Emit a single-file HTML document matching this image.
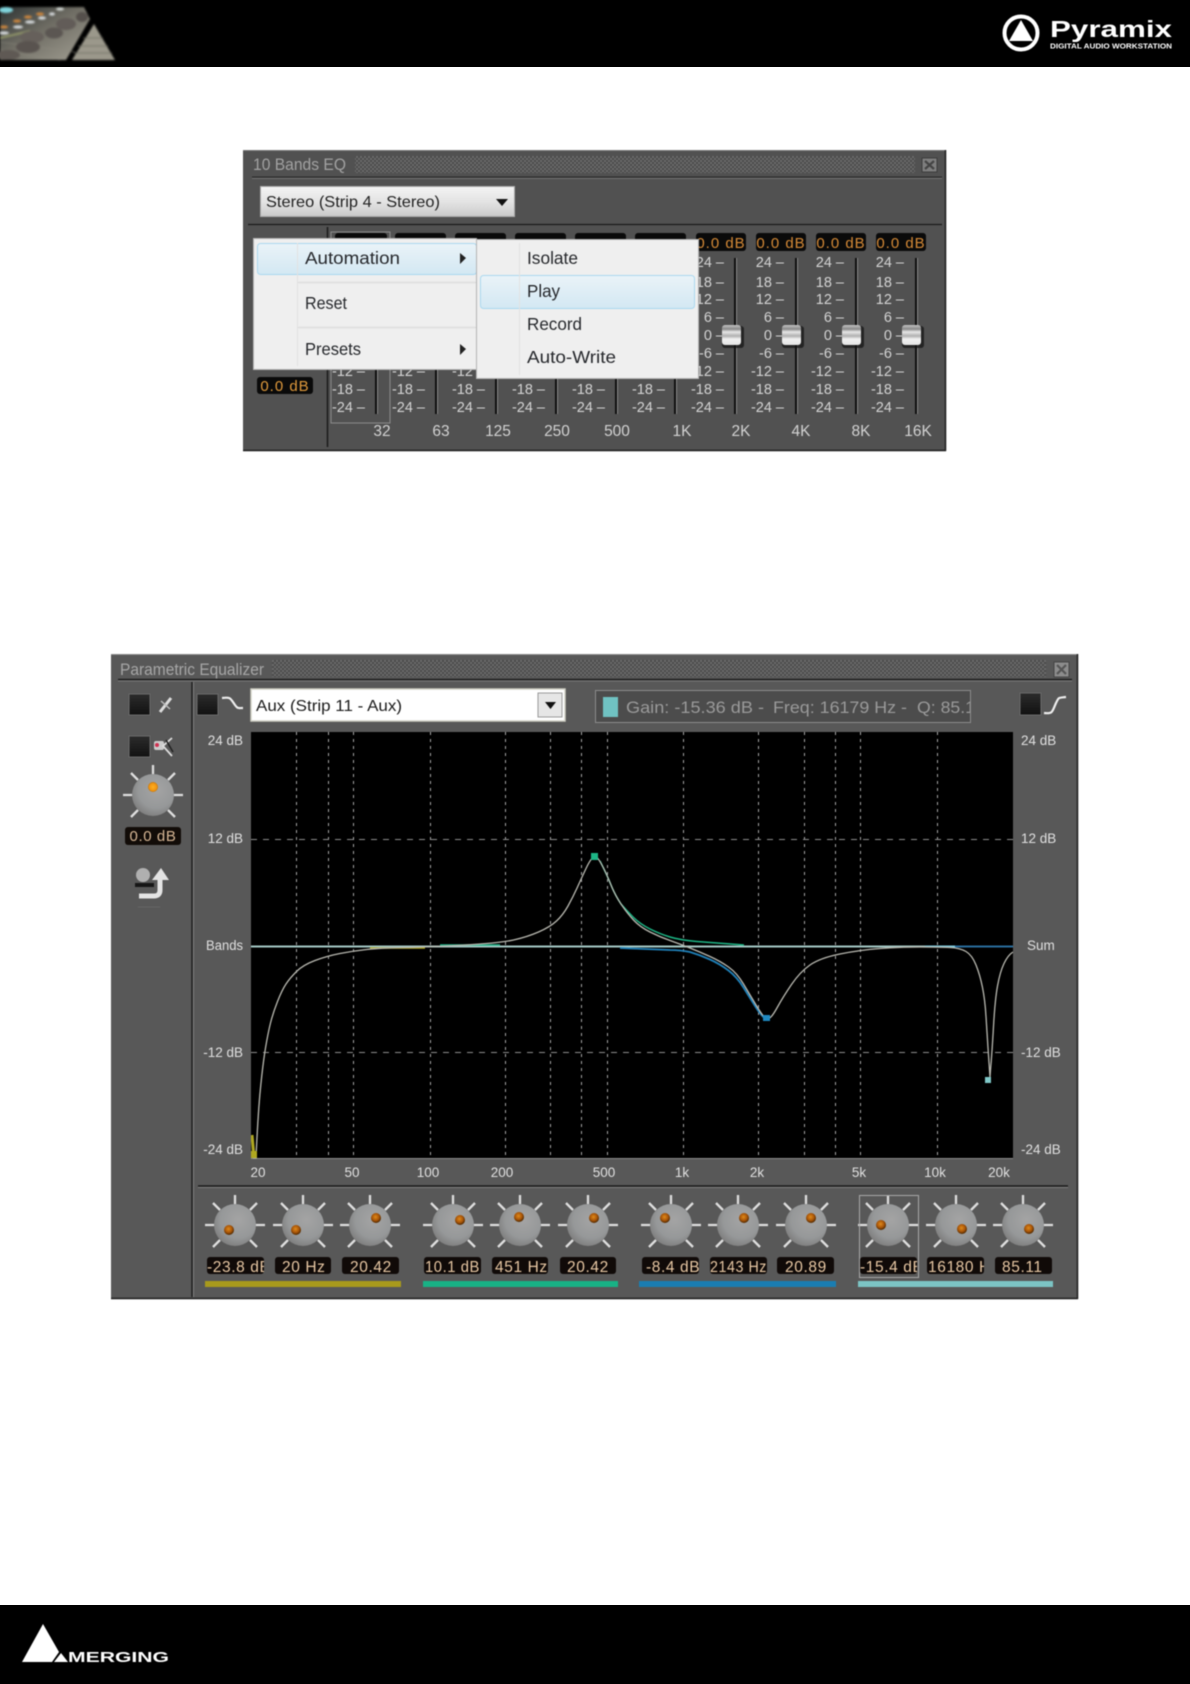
<!DOCTYPE html>
<html><head><meta charset="utf-8"><title>Pyramix EQ</title>
<style>
html,body{margin:0;padding:0;background:#fff}
svg{display:block;font-family:"Liberation Sans",Arial,sans-serif}
.soft{filter:blur(.4px)}
.soft2{filter:blur(.55px)}
.sc{font-size:14.5px;fill:#d4d4d4;text-anchor:end}
.fq{font-size:15.5px;fill:#d2d2d2;text-anchor:middle}
.db{font-size:15px;fill:#d68a36;letter-spacing:1px;text-anchor:middle}
.val{font-size:15.5px;fill:#e8c8a4;letter-spacing:.6px}
.ax{font-size:13.5px;fill:#e0e0e0}
.m{font-size:17.5px;fill:#25272b}
</style></head><body>
<svg width="1190" height="1684" viewBox="0 0 1190 1684" xmlns="http://www.w3.org/2000/svg">
<defs>
<pattern id="dots" width="4" height="4" patternUnits="userSpaceOnUse"><rect width="4" height="4" fill="#4c4c4c"/><circle cx="1" cy="1" r="1" fill="#727272"/><circle cx="3" cy="3" r="1" fill="#727272"/></pattern>
<linearGradient id="combo" x1="0" y1="0" x2="0" y2="1"><stop offset="0" stop-color="#f4f4f4"/><stop offset=".55" stop-color="#e2e2e2"/><stop offset="1" stop-color="#c8c8c8"/></linearGradient>
<linearGradient id="hi" x1="0" y1="0" x2="0" y2="1"><stop offset="0" stop-color="#eaf3f8"/><stop offset="1" stop-color="#d3e8f3"/></linearGradient>
<linearGradient id="cap" x1="0" y1="0" x2="0" y2="1"><stop offset="0" stop-color="#c4c4c4"/><stop offset=".2" stop-color="#8a8a8a"/><stop offset=".35" stop-color="#e8e8e8"/><stop offset=".55" stop-color="#b0b0b0"/><stop offset=".7" stop-color="#f2f2f2"/><stop offset="1" stop-color="#e4e4e4"/></linearGradient>
<linearGradient id="sq" x1="0" y1="0" x2="0" y2="1"><stop offset="0" stop-color="#2c2c2c"/><stop offset="1" stop-color="#111"/></linearGradient>
<radialGradient id="kn" cx=".58" cy=".38" r=".72"><stop offset="0" stop-color="#a4a4a4"/><stop offset=".6" stop-color="#969899"/><stop offset=".88" stop-color="#808080"/><stop offset="1" stop-color="#666"/></radialGradient>
<radialGradient id="led" cx=".45" cy=".4" r=".6"><stop offset="0" stop-color="#e08a1a"/><stop offset=".6" stop-color="#a85508"/><stop offset="1" stop-color="#4a2600"/></radialGradient>
<radialGradient id="led2" cx=".5" cy=".5" r=".55"><stop offset="0" stop-color="#ffb020"/><stop offset=".7" stop-color="#ee9210"/><stop offset="1" stop-color="#a06818"/></radialGradient>
<linearGradient id="cons" x1="0" y1="0" x2="1" y2="1"><stop offset="0" stop-color="#2c3232"/><stop offset=".45" stop-color="#6f6d64"/><stop offset="1" stop-color="#a3a094"/></linearGradient>
<g id="knob">
<g stroke="#dedede" stroke-width="2.300">
<path d="M0-30V-21M-30 0H-20M30 0H20M-22-22L-15-15M22-22L15-15M-22 22L-15 15M22 22L15 15"/>
</g>
<circle r="21" fill="url(#kn)"/>
</g>
<g id="fader">
<rect x="-13" y="0" width="22" height="22" rx="3" fill="#111" opacity=".7"/>
<rect x="-13" y="-1" width="19" height="20" rx="3" fill="url(#cap)"/>
</g>
<clipPath id="infoClip"><rect x="598" y="692" width="372" height="30"/></clipPath>
<clipPath id="plotClip"><rect x="251" y="732" width="762" height="427"/></clipPath>
</defs>

<!-- header / footer -->
<rect width="1190" height="67" fill="#000"/>
<rect y="1605" width="1190" height="79" fill="#000"/>

<!-- top photo logo -->
<g style="filter:blur(1px)">
<polygon points="0,7 84,7 90,19 66,60 0,60" fill="url(#cons)"/>
<polygon points="94,24 115,60 72,60" fill="#9b988b"/>
<path d="M83 38H103M78 46H108M74 53H112" stroke="#6e6c62" stroke-width=".8"/>
<path d="M0 50L60 60M0 42L75 52" stroke="#8e8c80" stroke-width="1" opacity=".5"/>
<ellipse cx="6" cy="10" rx="7" ry="3" fill="#7fd4dc"/>
<ellipse cx="28" cy="17" rx="4" ry="1.600" fill="#c8843e"/><ellipse cx="40" cy="14" rx="4" ry="1.600" fill="#c8843e"/><ellipse cx="17" cy="21" rx="4" ry="1.600" fill="#c8843e"/><ellipse cx="4" cy="27" rx="4" ry="1.600" fill="#c8843e"/>
<ellipse cx="30" cy="22" rx="5" ry="1.600" fill="#d4d8da"/><ellipse cx="42" cy="18" rx="4" ry="1.600" fill="#d4d8da"/><ellipse cx="52" cy="14" rx="3" ry="1.600" fill="#d4d8da"/><ellipse cx="18" cy="27" rx="5" ry="1.600" fill="#d4d8da"/><ellipse cx="4" cy="33" rx="5" ry="1.600" fill="#d4d8da"/>
<ellipse cx="60" cy="9" rx="4" ry="1.600" fill="#cfd4d0"/>
<path d="M0 38L30 31" stroke="#8f9468" stroke-width="2"/>
<ellipse cx="32" cy="37" rx="12" ry="6" fill="#66605b"/><ellipse cx="28" cy="47" rx="12" ry="6" fill="#59534f"/><ellipse cx="8" cy="55" rx="12" ry="5" fill="#5f5954"/>
<ellipse cx="54" cy="33" rx="9" ry="5.500" fill="#5b5652"/><ellipse cx="66" cy="24" rx="10" ry="6" fill="#625c58"/><ellipse cx="82" cy="17" rx="6" ry="5" fill="#55504c"/>
</g>

<!-- Pyramix logo -->
<g class="soft">
<circle cx="1021" cy="33" r="16.500" fill="none" stroke="#fff" stroke-width="4"/>
<polygon points="1021,20 1033,41 1009,41" fill="#fff"/>
<text x="1050" y="37" font-size="23" font-weight="bold" fill="#fff" textLength="122" lengthAdjust="spacingAndGlyphs">Pyramix</text>
<text x="1050" y="48.500" font-size="7.500" font-weight="bold" fill="#fff" textLength="122" lengthAdjust="spacingAndGlyphs">DIGITAL AUDIO WORKSTATION</text>
</g>

<!-- MERGING logo -->
<g class="soft">
<polygon points="43,1624 59,1652 52,1662 22,1662" fill="#fff"/>
<polygon points="61,1653 68,1662 54,1662" fill="#fff"/>
<text x="68" y="1662" font-size="15" font-weight="bold" fill="#fff" textLength="101" lengthAdjust="spacingAndGlyphs">MERGING</text>
</g>

<!-- ============ 10 BANDS EQ ============ -->
<g class="soft">
<rect x="243" y="150" width="703" height="301" fill="#515151"/>
<path d="M243 150.500H946" stroke="#777"/><path d="M945.500 150V451M243 450.500H946" stroke="#1c1c1c" stroke-width="1.500"/>
<text x="253" y="170" font-size="17" fill="#a2a2a2" textLength="93" lengthAdjust="spacingAndGlyphs">10 Bands EQ</text>
<rect x="355" y="156" width="560" height="17" fill="url(#dots)"/>
<rect x="922" y="158" width="15" height="14" fill="#7e7e7e" stroke="#3c3c3c"/><path d="M925 161L934 169M934 161L925 169" stroke="#444" stroke-width="2.200"/>
<path d="M252 177H942" stroke="#262626"/><path d="M252 178.500H942" stroke="#6e6e6e"/>
<path d="M248 224.500H942" stroke="#1a1a1a" stroke-width="1.200"/>
<rect x="260.500" y="186.500" width="254" height="30" fill="url(#combo)" stroke="#aaa"/>
<text x="266" y="207" font-size="16" fill="#222" textLength="174" lengthAdjust="spacingAndGlyphs">Stereo (Strip 4 - Stereo)</text>
<polygon points="496,199 508,199 502,206" fill="#111"/>
<path d="M327.500 227V447" stroke="#1a1a1a" stroke-width="1.500"/>
<rect x="331" y="232" width="59" height="191" fill="none" stroke="#8c8c8c"/>

<!-- display boxes -->
<g fill="#0a0a0a">
<rect x="335" y="233" width="52" height="18" rx="3"/><rect x="395" y="233" width="51" height="18" rx="3"/><rect x="455" y="233" width="51" height="18" rx="3"/><rect x="515" y="233" width="51" height="18" rx="3"/><rect x="575" y="233" width="51" height="18" rx="3"/><rect x="635" y="233" width="51" height="18" rx="3"/>
<rect x="696" y="233" width="50" height="18" rx="3"/><rect x="756" y="233" width="50" height="18" rx="3"/><rect x="816" y="233" width="50" height="18" rx="3"/><rect x="876" y="233" width="50" height="18" rx="3"/>
<rect x="257" y="377" width="56" height="17" rx="3"/>
</g>
<text class="db" x="721" y="248">0.0 dB</text><text class="db" x="781" y="248">0.0 dB</text><text class="db" x="841" y="248">0.0 dB</text><text class="db" x="901" y="248">0.0 dB</text>
<text class="db" x="285" y="391" style="fill:#e09a3c">0.0 dB</text>

<!-- tracks -->
<g stroke="#0e0e0e" stroke-width="2"><path d="M376 258V414M436 258V414M496 258V414M556 258V414M616 258V414M675 258V414M735 258V414M796 258V414M856 258V414M916 258V414"/></g>
<g stroke="#8a8a8a"><path d="M377.500 258V414M437.500 258V414M497.500 258V414M557.500 258V414M617.500 258V414M676.500 258V414M736.500 258V414M797.500 258V414M857.500 258V414M917.500 258V414"/></g>

<!-- scale labels -->
<g class="sc">
<text x="365" y="376">-12 –</text><text x="425" y="376">-12 –</text><text x="485" y="376">-12 –</text>
<text x="365" y="394">-18 –</text><text x="425" y="394">-18 –</text><text x="485" y="394">-18 –</text><text x="545" y="394">-18 –</text><text x="605" y="394">-18 –</text><text x="665" y="394">-18 –</text>
<text x="365" y="412">-24 –</text><text x="425" y="412">-24 –</text><text x="485" y="412">-24 –</text><text x="545" y="412">-24 –</text><text x="605" y="412">-24 –</text><text x="665" y="412">-24 –</text>
<text x="724" y="267">24 –</text><text x="724" y="287">18 –</text><text x="724" y="304">12 –</text><text x="724" y="322">6 –</text><text x="724" y="340">0 –</text><text x="724" y="358">-6 –</text><text x="724" y="376">-12 –</text><text x="724" y="394">-18 –</text><text x="724" y="412">-24 –</text>
<text x="784" y="267">24 –</text><text x="784" y="287">18 –</text><text x="784" y="304">12 –</text><text x="784" y="322">6 –</text><text x="784" y="340">0 –</text><text x="784" y="358">-6 –</text><text x="784" y="376">-12 –</text><text x="784" y="394">-18 –</text><text x="784" y="412">-24 –</text>
<text x="844" y="267">24 –</text><text x="844" y="287">18 –</text><text x="844" y="304">12 –</text><text x="844" y="322">6 –</text><text x="844" y="340">0 –</text><text x="844" y="358">-6 –</text><text x="844" y="376">-12 –</text><text x="844" y="394">-18 –</text><text x="844" y="412">-24 –</text>
<text x="904" y="267">24 –</text><text x="904" y="287">18 –</text><text x="904" y="304">12 –</text><text x="904" y="322">6 –</text><text x="904" y="340">0 –</text><text x="904" y="358">-6 –</text><text x="904" y="376">-12 –</text><text x="904" y="394">-18 –</text><text x="904" y="412">-24 –</text>
</g>
<use href="#fader" x="735" y="326"/><use href="#fader" x="795" y="326"/><use href="#fader" x="855" y="326"/><use href="#fader" x="915" y="326"/>

<!-- freq labels -->
<text class="fq" x="382" y="436">32</text><text class="fq" x="441" y="436">63</text><text class="fq" x="498" y="436">125</text><text class="fq" x="557" y="436">250</text><text class="fq" x="617" y="436">500</text><text class="fq" x="682" y="436">1K</text><text class="fq" x="741" y="436">2K</text><text class="fq" x="801" y="436">4K</text><text class="fq" x="861" y="436">8K</text><text class="fq" x="918" y="436">16K</text>

<!-- context menus -->
<rect x="253.500" y="238.500" width="223" height="131" fill="#efefef" stroke="#b4b4b4"/>
<rect x="257.500" y="243.500" width="219" height="31" rx="3" fill="url(#hi)" stroke="#aad8ef"/>
<path d="M297.500 243V366" stroke="#e2e2e2"/><path d="M298 282.500H476M298 327.500H476" stroke="#dedede" stroke-width="1.500"/>
<text class="m" x="305" y="264" textLength="95" lengthAdjust="spacingAndGlyphs">Automation</text>
<text class="m" x="305" y="309" textLength="42" lengthAdjust="spacingAndGlyphs">Reset</text>
<text class="m" x="305" y="355" textLength="56" lengthAdjust="spacingAndGlyphs">Presets</text>
<polygon points="460,253 466,258 460,264" fill="#222"/><polygon points="460,344 466,349 460,355" fill="#222"/>
<rect x="476.500" y="239.500" width="222" height="139" fill="#efefef" stroke="#b4b4b4"/>
<rect x="480.500" y="275.500" width="214" height="33" rx="3" fill="url(#hi)" stroke="#aad8ef"/>
<path d="M519.500 243V375" stroke="#e2e2e2"/>
<text class="m" x="527" y="264" textLength="51" lengthAdjust="spacingAndGlyphs">Isolate</text>
<text class="m" x="527" y="297" textLength="33" lengthAdjust="spacingAndGlyphs">Play</text>
<text class="m" x="527" y="330" textLength="55" lengthAdjust="spacingAndGlyphs">Record</text>
<text class="m" x="527" y="363" textLength="89" lengthAdjust="spacingAndGlyphs">Auto-Write</text>
</g>

<!-- ============ PARAMETRIC EQ ============ -->
<g class="soft2">
<rect x="111" y="654" width="967" height="645" fill="#585858"/>
<path d="M111 654.500H1078" stroke="#8a8a8a"/><path d="M1077.500 654V1299M111 1298.500H1078" stroke="#1c1c1c" stroke-width="1.500"/>
<text x="120" y="675" font-size="17" fill="#a6a6a6" textLength="144" lengthAdjust="spacingAndGlyphs">Parametric Equalizer</text>
<rect x="272" y="660" width="774" height="17" fill="url(#dots)"/>
<rect x="1054" y="662" width="15" height="15" fill="#8c8c8c" stroke="#444"/><path d="M1057 665L1066 674M1066 665L1057 674" stroke="#555" stroke-width="2.200"/>
<path d="M118 679.500H1072" stroke="#1e1e1e" stroke-width="1.500"/><path d="M118 681H1072" stroke="#7a7a7a"/>
<path d="M192 682V1297" stroke="#1e1e1e" stroke-width="1.500"/><path d="M193.500 682V1297" stroke="#7e7e7e"/>
<path d="M198 1186H1068" stroke="#1a1a1a" stroke-width="1.500"/><path d="M198 1187.500H1068" stroke="#7e7e7e"/>

<!-- left column -->
<rect x="129" y="694" width="21" height="21" fill="url(#sq)" stroke="#6a6a6a"/>
<path d="M160 712L171 698" stroke="#ddd" stroke-width="3"/><path d="M161 701L170 709" stroke="#bbb" stroke-width="1.500"/>
<rect x="129" y="736" width="21" height="21" fill="url(#sq)" stroke="#6a6a6a"/>
<rect x="154" y="741" width="10" height="9" rx="2" fill="#ccc"/><circle cx="157" cy="745" r="2" fill="#d03050"/>
<path d="M172 738L163 746L172 756" stroke="#ddd" stroke-width="1.800" fill="none"/><path d="M166 740L173 752" stroke="#222" stroke-width="1.500"/>
<use href="#knob" x="153" y="795"/><circle cx="153" cy="787" r="5" fill="url(#led2)"/>
<rect x="125" y="827" width="56" height="18" rx="3" fill="#120c08"/>
<text x="153" y="841" class="val" text-anchor="middle" style="font-size:15px;fill:#d8b896">0.0 dB</text>
<circle cx="143" cy="875" r="7" fill="#b0b0b0"/><rect x="135" y="883" width="19" height="4" fill="#161616"/>
<path d="M139 896H154Q160 896 160 890V878" fill="none" stroke="#e4e4e4" stroke-width="5"/><polygon points="161,868 169,880 152,880" fill="#e4e4e4"/>
<path d="M138 907H160" stroke="#666"/>

<!-- top controls -->
<rect x="197" y="694" width="21" height="21" fill="url(#sq)" stroke="#6a6a6a"/>
<path d="M222 698C231 697 230 698 235 705C238 709 238 708 243 708" fill="none" stroke="#eee" stroke-width="2.200"/>
<rect x="251" y="689" width="314" height="32" fill="#fff" stroke="#cfd0c4" stroke-width="1.500"/>
<text x="256" y="711" font-size="16" fill="#1a1a1a" textLength="146" lengthAdjust="spacingAndGlyphs">Aux (Strip 11 - Aux)</text>
<rect x="538" y="693" width="24" height="24" fill="#e6e6e6" stroke="#999"/><polygon points="545,702 556,702 550.500,709" fill="#111"/>
<rect x="595.500" y="690.500" width="375" height="32" fill="#4c4c4c" stroke="#8c8c8c"/>
<rect x="603" y="697" width="15" height="20" fill="#70c2c2"/>
<g clip-path="url(#infoClip)" font-size="17" fill="#9a9a9a">
<text x="626" y="713" textLength="138" lengthAdjust="spacingAndGlyphs">Gain: -15.36 dB -</text>
<text x="773" y="713" textLength="134" lengthAdjust="spacingAndGlyphs">Freq: 16179 Hz -</text>
<text x="917" y="713" textLength="58" lengthAdjust="spacingAndGlyphs">Q: 85.1</text>
</g>
<rect x="1020" y="693" width="21" height="22" fill="url(#sq)" stroke="#6a6a6a"/>
<path d="M1044 713C1053 714 1052 712 1056 703C1059 697 1058 698 1066 697" fill="none" stroke="#eee" stroke-width="2.200"/>

<!-- plot -->
<rect x="251" y="732" width="762" height="427" fill="#000"/>
<g stroke="#a8a8a8" stroke-width="1" stroke-dasharray="3 4">
<path d="M296.500 732V1158M328.500 732V1158M353.500 732V1158M430.500 732V1158M505.500 732V1158M550.500 732V1158M581.500 732V1158M607.500 732V1158M683.500 732V1158M758.500 732V1158M804.500 732V1158M835.500 732V1158M860.500 732V1158M937.500 732V1158"/>
</g>
<g stroke="#8c8c8c" stroke-width="1" stroke-dasharray="6 6"><path d="M251 839.500H1013M251 1052.500H1013"/></g>
<path d="M251 1158.500H1013" stroke="#8a8a8a"/>
<g clip-path="url(#plotClip)" fill="none">
<path d="M251 946.500H950" stroke="#a4c8c4" stroke-width="2"/>
<path d="M950 946.500H1013" stroke="#2a6d9c" stroke-width="2"/>
<path d="M925 946.500H955" stroke="#7ccce0" stroke-width="2"/>
<path d="M370 948H425" stroke="#b0a820" stroke-width="1.500"/>
<path d="M440 945H500" stroke="#20b488" stroke-width="1.500"/>
<path d="M600 861Q607 875 611 885Q615 895 621 904Q627 911 633 917Q640 924 650 929Q660 934 670 937Q680 940 697 941.500L744 945" stroke="#1db585" stroke-width="1.500"/>
<path d="M620 948L670 950Q680 950 690 952Q700 955 710 959.500Q720 964 728.500 970.500Q737 977 743.500 987.500Q750 998 756 1007.500Q762 1017 767 1020" stroke="#1f80b8" stroke-width="1.800"/>
<path d="M253 1158L256 1158Q258 1113 260.500 1088Q263 1063 265.500 1048Q268 1033 270.500 1023Q273 1013 277.500 1001.500Q282 990 286 984Q290 978 296.500 971.500Q303 965 315 960.500Q327 956 340 953.500Q353 951 366.500 949.500Q380 948 405 947.500Q430 947 465 945Q500 943 513.500 940Q527 937 538.500 932Q550 927 556.500 921Q563 915 568 906Q573 897 577.500 887Q582 877 586 868.500Q590 860 592.500 858Q595 855 597.500 858Q600 861 603.500 868Q607 875 611 885Q615 895 621 904Q627 913 633.500 920Q640 927 650 932Q660 937 670 940.500Q680 944 690 948Q700 952 710 956.500Q720 961 728.500 967Q737 973 743.500 984Q750 995 756 1005Q762 1015 764.500 1017Q767 1020 769.500 1018Q772 1017 777.500 1007Q783 997 791.500 984.500Q800 972 810 965Q820 958 840 954Q860 950 880 948.500Q900 947 920 947Q940 947 950 947.500Q960 948 966 951.500Q972 955 976 965Q980 975 982.500 987.500Q985 1000 986 1016.500Q987 1033 988 1048Q989 1063 989.500 1070L990 1077L990.500 1070Q992 1053 993.500 1026.500Q995 1000 997.500 986Q1000 972 1004 963.500Q1008 955 1013 952" stroke="#b8b8b0" stroke-width="1.300"/>
<path d="M252 1135L254 1158" stroke="#b0a820" stroke-width="3"/>
</g>
<rect x="251" y="1151" width="6" height="7" fill="#b0a820"/>
<rect x="591" y="853" width="7" height="7" fill="#1db585"/>
<rect x="763" y="1015" width="7" height="6" fill="#1f88c0"/>
<rect x="985" y="1077" width="6" height="6" fill="#80c8c8"/>

<!-- axis labels -->
<g class="ax" text-anchor="end">
<text x="243" y="745">24 dB</text><text x="243" y="843">12 dB</text><text x="243" y="950" textLength="37" lengthAdjust="spacingAndGlyphs">Bands</text><text x="243" y="1057">-12 dB</text><text x="243" y="1154">-24 dB</text>
</g>
<g class="ax">
<text x="1021" y="745">24 dB</text><text x="1021" y="843">12 dB</text><text x="1027" y="950">Sum</text><text x="1021" y="1057">-12 dB</text><text x="1021" y="1154">-24 dB</text>
</g>
<g class="ax" text-anchor="middle">
<text x="258" y="1177">20</text><text x="352" y="1177">50</text><text x="428" y="1177">100</text><text x="502" y="1177">200</text><text x="604" y="1177">500</text><text x="682" y="1177">1k</text><text x="757" y="1177">2k</text><text x="859" y="1177">5k</text><text x="935" y="1177">10k</text><text x="999" y="1177">20k</text>
</g>

<!-- knobs -->
<use href="#knob" x="235" y="1225"/><circle cx="229" cy="1230" r="5" fill="url(#led)"/>
<use href="#knob" x="303" y="1225"/><circle cx="296" cy="1230" r="5" fill="url(#led)"/>
<use href="#knob" x="370" y="1225"/><circle cx="376" cy="1218" r="5" fill="url(#led)"/>
<use href="#knob" x="453" y="1225"/><circle cx="460" cy="1220" r="5" fill="url(#led)"/>
<use href="#knob" x="520" y="1225"/><circle cx="519" cy="1217" r="5" fill="url(#led)"/>
<use href="#knob" x="588" y="1225"/><circle cx="594" cy="1218" r="5" fill="url(#led)"/>
<use href="#knob" x="671" y="1225"/><circle cx="665" cy="1218" r="5" fill="url(#led)"/>
<use href="#knob" x="738" y="1225"/><circle cx="744" cy="1218" r="5" fill="url(#led)"/>
<use href="#knob" x="806" y="1225"/><circle cx="811" cy="1218" r="5" fill="url(#led)"/>
<use href="#knob" x="888" y="1225"/><circle cx="881" cy="1225" r="5" fill="url(#led)"/>
<use href="#knob" x="956" y="1225"/><circle cx="962" cy="1229" r="5" fill="url(#led)"/>
<use href="#knob" x="1023" y="1225"/><circle cx="1029" cy="1229" r="5" fill="url(#led)"/>
<rect x="859.500" y="1195.500" width="59" height="82" fill="none" stroke="#a8a8a8"/>

<!-- value boxes -->
<g fill="#100a08">
<rect x="207" y="1257" width="57" height="17" rx="3"/><rect x="275" y="1257" width="56" height="17" rx="3"/><rect x="342" y="1257" width="57" height="17" rx="3"/>
<rect x="424" y="1257" width="57" height="17" rx="3"/><rect x="492" y="1257" width="56" height="17" rx="3"/><rect x="560" y="1257" width="56" height="17" rx="3"/>
<rect x="642" y="1257" width="57" height="17" rx="3"/><rect x="710" y="1257" width="57" height="17" rx="3"/><rect x="777" y="1257" width="57" height="17" rx="3"/>
<rect x="860" y="1257" width="57" height="17" rx="3"/><rect x="927" y="1257" width="57" height="17" rx="3"/><rect x="995" y="1257" width="57" height="17" rx="3"/>
</g>
<svg x="207" y="1255" width="57" height="21"><text class="val" x="0" y="17">-23.8 dB</text></svg>
<svg x="275" y="1255" width="56" height="21"><text class="val" x="7" y="17">20 Hz</text></svg>
<svg x="342" y="1255" width="57" height="21"><text class="val" x="8" y="17">20.42</text></svg>
<svg x="424" y="1255" width="57" height="21"><text class="val" x="1" y="17" textLength="55" lengthAdjust="spacingAndGlyphs">10.1 dB</text></svg>
<svg x="492" y="1255" width="56" height="21"><text class="val" x="3" y="17">451 Hz</text></svg>
<svg x="560" y="1255" width="56" height="21"><text class="val" x="7" y="17">20.42</text></svg>
<svg x="642" y="1255" width="57" height="21"><text class="val" x="4" y="17">-8.4 dB</text></svg>
<svg x="710" y="1255" width="57" height="21"><text class="val" x="0" y="17" textLength="57" lengthAdjust="spacingAndGlyphs">2143 Hz</text></svg>
<svg x="777" y="1255" width="57" height="21"><text class="val" x="8" y="17">20.89</text></svg>
<svg x="860" y="1255" width="57" height="21"><text class="val" x="0" y="17">-15.4 dB</text></svg>
<svg x="927" y="1255" width="57" height="21"><text class="val" x="1" y="17">16180 Hz</text></svg>
<svg x="995" y="1255" width="57" height="21"><text class="val" x="7" y="17">85.11</text></svg>

<!-- band bars -->
<rect x="205" y="1281" width="196" height="6" fill="#a89a1c"/>
<rect x="423" y="1281" width="195" height="6" fill="#18b285"/>
<rect x="639" y="1281" width="197" height="6" fill="#1a7db2"/>
<rect x="858" y="1281" width="195" height="6" fill="#7cc4c4"/>
</g>
</svg>
</body></html>
